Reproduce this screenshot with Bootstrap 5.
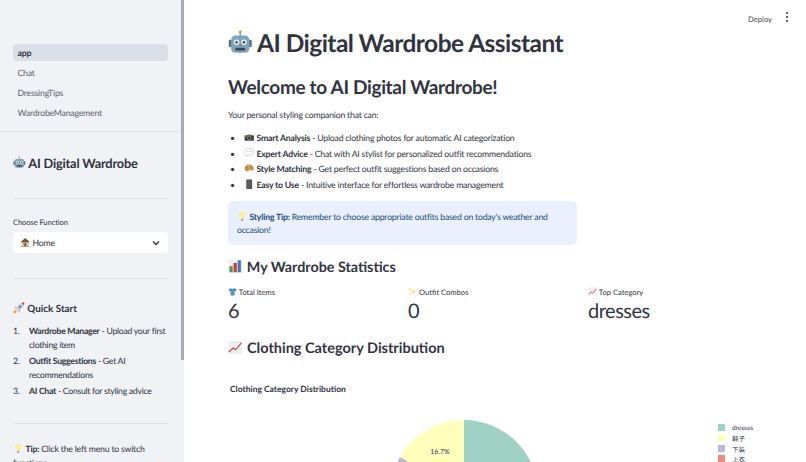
<!DOCTYPE html>
<html lang="en">
<head>
<meta charset="UTF-8">
<meta name="viewport" content="width=device-width, initial-scale=1.0">
<title>AI Digital Wardrobe Assistant</title>
<link href="https://cdn.jsdelivr.net/npm/bootstrap@5.3.0/dist/css/bootstrap.min.css" rel="stylesheet">
<style>
html, body { height: 100%; overflow: hidden; }
body { font-family: "Lato", "Noto Sans CJK SC", sans-serif; color: #31333f; background: #fff; font-size: 8.7px; letter-spacing: -0.2px; text-rendering: geometricPrecision; }
.emo { display: inline-block; vertical-align: 0.26em; width: 1.2em; height: 1.2em; margin: -0.4em 0; }
.side-panel { width: 184px; height: 462px; flex: none; background: #f0f2f6; position: relative; overflow: hidden; }
.side-thumb { position: absolute; top: 0; right: 0; width: 3px; height: 360px; background: #a8abb1; }
.side-nav { padding: 44px 13px 10px; border-bottom: 1px solid #dfe1e6; margin-right: 3px; gap: 3px; }
.side-nav .nav-link { height: 17px; line-height: 17px; padding: 0 4.5px; font-size: 8.7px; color: #5c5f6b; border-radius: 4px; }
.side-nav .nav-link.active { background: #dbdfe8; color: #31333f; font-weight: 700; }
.side-body { padding: 0 13px; width: 181px; }
.side-title { margin: 21px 0 0; font-size: 12.8px; line-height: 20px; font-weight: 700; letter-spacing: -0.2px; }
.side-title .emo { width: 1em; height: 1em; vertical-align: 0.3em; }
.side-rule { margin: 25px 0 0; border: 0; border-top: 1px solid #dfe1e6; opacity: 1; }
.field-label { font-size: 7.6px; line-height: 12px; margin-top: 17px; letter-spacing: -0.1px; }
.fake-select { height: 21px; margin-top: 4px; background: #fff; border-radius: 4px; padding: 0 8px 0 7px; }
.quick-title { margin: 22px 0 0; font-size: 9.9px; line-height: 16px; font-weight: 700; letter-spacing: 0; }
.quick-list { margin: 7px -2px 0 0; padding: 0; list-style: none; counter-reset: qs; line-height: 14.4px; letter-spacing: -0.28px; }
.quick-list li { display: flex; counter-increment: qs; margin-bottom: 1px; }
.quick-list li::before { content: counter(qs) "."; flex: none; width: 16px; }
.side-tip { line-height: 14.4px; margin: 18px 0 0; }
.main-pane { flex: 1; min-width: 0; height: 462px; padding: 0 38px 0 44px; overflow: hidden; }
.top-bar { height: 30px; padding-top: 11px; line-height: 16px; font-size: 7.6px; letter-spacing: 0; margin-right: -20px; color: #444650; }
.dots { width: 2px; margin-left: 14px; gap: 2px; padding-top: 1px; }
.dots i { display: block; width: 2px; height: 2px; border-radius: 50%; background: #31333f; }
.page-title { margin: 0; font-size: 24.5px; line-height: 28px; font-weight: 700; white-space: nowrap; letter-spacing: -0.54px; }
.page-title .emo { width: 1em; height: 1em; vertical-align: 0.3em; }
.page-sub { margin: 16px 0 0; font-size: 19px; line-height: 28px; font-weight: 700; letter-spacing: -0.33px; }
.intro { margin: 5px 0 0; line-height: 16px; }
.feature-list { margin: 7px 0 0; padding: 0; list-style: none; }
.feature-list li { line-height: 15.7px; padding-left: 16px; position: relative; }
.feature-list li::before { content: "•"; position: absolute; left: 2px; }
.tip-box { width: 349px; height: 44px; margin-top: 8px; padding: 9px; background: #e9f0fb; color: #1b4a80; border-radius: 5px; line-height: 13.5px; }
.sec-head { margin: 13px 0 0; font-size: 14.3px; line-height: 20px; font-weight: 700; letter-spacing: 0; }
.sec-head .emo { width: 1em; height: 1em; vertical-align: 0.3em; margin-right: 1px; }
.stat-row { margin-top: 7px; margin-bottom: 15px; }
.stat-row + .sec-head { font-size: 14.5px; margin-top: 0; }
.stat-label { font-size: 7.6px; line-height: 14px; letter-spacing: 0; }
.stat-value { font-size: 20px; line-height: 25px; letter-spacing: -0.5px; }
.chart-area { display: block; margin-top: 11px; }
.chart-area text { fill: #31333f; font-family: "Lato", "Noto Sans CJK SC", sans-serif; letter-spacing: 0; }
</style>
</head>
<body>
<svg width="0" height="0" class="d-block position-absolute">
  <symbol id="i-robot" viewBox="0 0 20 20">
    <circle cx="10" cy="1.6" r="1.3" fill="#e0a23c"/><rect x="9.4" y="2" width="1.2" height="3" fill="#8a97a0"/>
    <rect x="0.6" y="8" width="3" height="6" rx="1.2" fill="#5d7482"/><rect x="16.4" y="8" width="3" height="6" rx="1.2" fill="#5d7482"/>
    <rect x="2.6" y="4.5" width="14.8" height="14" rx="3.5" fill="#7fa6b8"/>
    <circle cx="7" cy="10" r="2.2" fill="#e8eef1"/><circle cx="13" cy="10" r="2.2" fill="#e8eef1"/>
    <circle cx="7" cy="10" r="1" fill="#33424c"/><circle cx="13" cy="10" r="1" fill="#33424c"/>
    <rect x="6" y="14.4" width="8" height="2.3" rx="0.6" fill="#3a4a54"/><path d="M9 11.5h2l-1 2z" fill="#d8574a"/>
  </symbol>
  <symbol id="i-house" viewBox="0 0 20 20">
    <path d="M3.5 9.5h13V18h-13z" fill="#d9b98c"/><path d="M1 10 10 2l9 8z" fill="#7a4a32"/>
    <rect x="8.3" y="12" width="3.4" height="6" fill="#6b4a34"/><rect x="4.6" y="11.5" width="2.6" height="2.6" fill="#7fc0de"/><rect x="12.8" y="11.5" width="2.6" height="2.6" fill="#7fc0de"/>
    <path d="M0 18h20v1.5H0z" fill="#6fa04e"/>
  </symbol>
  <symbol id="i-rocket" viewBox="0 0 20 20">
    <path d="M3 13c-2 1.500-2 4.500-2 6 2 0 4.500-.5 6-2.500z" fill="#f2a02e"/>
    <path d="M6 8.500 3 9.500l2.500 1.500zM11.500 14l-1 3L9 14.500z" fill="#c9382e"/>
    <path d="M5 11.500C7 6 12 1.500 19 1c-.5 7-5 12-10.500 14z" fill="#c3ccd4"/>
    <path d="M14.500 1.600 18.500 5.500C19 4 19 2.500 19 1c-1.500 0-3 .2-4.500.6z" fill="#d6402f"/>
    <circle cx="12" cy="8" r="2" fill="#4a87b8"/>
  </symbol>
  <symbol id="i-bulb" viewBox="0 0 20 20">
    <path d="M10 1a6.300 6.300 0 0 0-3.700 11.400c.8.700 1 1.600 1 2.600h5.400c0-1 .2-1.900 1-2.600A6.300 6.300 0 0 0 10 1z" fill="#fbeea0"/>
    <rect x="7.500" y="15" width="5" height="3" rx="0.800" fill="#a9aeb3"/><rect x="8.500" y="18" width="3" height="1.300" rx="0.600" fill="#7d8287"/>
  </symbol>
  <symbol id="i-camera" viewBox="0 0 20 20">
    <path d="M7 4h6l1 2H6z" fill="#e8a83a"/><rect x="1" y="6" width="18" height="11" rx="1.500" fill="#3f4448"/>
    <circle cx="10" cy="11.500" r="3.800" fill="#8a9097"/><circle cx="10" cy="11.500" r="2.200" fill="#2a2d30"/><rect x="2.500" y="7.200" width="3" height="1.300" fill="#c5c9cc"/>
  </symbol>
  <symbol id="i-bubble" viewBox="0 0 20 20">
    <path d="M10 2.500c-5 0-9 2.900-9 6.700 0 2.300 1.500 4.300 3.800 5.500L4 18l4.200-2.300c.6.100 1.200.1 1.800.1 5 0 9-2.900 9-6.600s-4-6.700-9-6.700z" fill="#fff" stroke="#a9aeb5" stroke-width="0.900"/>
    <circle cx="6.500" cy="9.200" r="0.900" fill="#8f959c"/><circle cx="10" cy="9.200" r="0.900" fill="#8f959c"/><circle cx="13.500" cy="9.200" r="0.900" fill="#8f959c"/>
  </symbol>
  <symbol id="i-palette" viewBox="0 0 20 20">
    <path d="M9.500 3C4.500 3 1 6.500 1 10.500S5 17 8 16c1.500-.5 1-2 2-2.500s3 .8 5.500.8c2.500 0 3.500-1.500 3.500-3C19 6.500 14.500 3 9.500 3z" fill="#c99a5a"/>
    <circle cx="5.500" cy="8" r="1.500" fill="#d9483b"/><circle cx="9.500" cy="6.300" r="1.500" fill="#e9c13a"/><circle cx="13.800" cy="7.800" r="1.500" fill="#5a9e4a"/><circle cx="4.800" cy="12" r="1.500" fill="#3f79b8"/>
  </symbol>
  <symbol id="i-phone" viewBox="0 0 20 20">
    <rect x="4.500" y="0.800" width="11" height="18.400" rx="2" fill="#3d4044"/><rect x="5.700" y="2.500" width="8.600" height="14" fill="#5a5e63"/><rect x="8.500" y="17.300" width="3" height="1" rx="0.500" fill="#8a8e92"/>
  </symbol>
  <symbol id="i-bars" viewBox="0 0 20 20">
    <rect x="0.500" y="0.500" width="19" height="19" fill="#eef1f4"/><rect x="2" y="10" width="4.500" height="8.500" fill="#4a9b4f"/><rect x="7.800" y="5.500" width="4.500" height="13" fill="#cf3b32"/><rect x="13.500" y="2" width="4.500" height="16.500" fill="#3c78c0"/>
  </symbol>
  <symbol id="i-shirt" viewBox="0 0 20 20">
    <path d="M6.500 2 1 5.500l2 4.500 2.500-1V18.500h9V9l2.500 1 2-4.500L13.500 2c-.5 1.500-2 2.200-3.500 2.200S7 3.500 6.500 2z" fill="#4f93c4"/>
    <path d="M7.500 2.200c.6 1.200 1.500 2 2.500 2s1.900-.8 2.500-2z" fill="#cfe3f1"/>
  </symbol>
  <symbol id="i-spark" viewBox="0 0 20 20">
    <path d="M12 2l1.800 5.700L19.500 10l-5.700 2.200L12 18l-1.800-5.800L4.500 10l5.700-2.300z" fill="#fbe58a"/>
    <path d="M4.500 1.500l.9 2.600L8 5l-2.600.9-.9 2.600-.9-2.600L1 5l2.600-.9zM4.500 13l.7 1.800L7 15.500l-1.800.7-.7 1.800-.7-1.800L2 15.500l1.800-.7z" fill="#fbd65a"/>
  </symbol>
  <symbol id="i-trend" viewBox="0 0 20 20">
    <rect x="0.500" y="1" width="19" height="18" fill="#eceef1"/>
    <path d="M1 16.500 7 11l3.500 2.500L18.500 4" fill="none" stroke="#d2473f" stroke-width="1.700"/>
  </symbol>
</svg>

<div class="d-flex">
  <aside class="side-panel">
    <div class="side-thumb"></div>
    <nav class="nav flex-column side-nav">
      <a class="nav-link active" href="#">app</a>
      <a class="nav-link" href="#">Chat</a>
      <a class="nav-link" href="#">DressingTips</a>
      <a class="nav-link" href="#">WardrobeManagement</a>
    </nav>
    <div class="side-body">
      <h2 class="side-title"><svg class="emo"><use href="#i-robot"/></svg> AI Digital Wardrobe</h2>
      <hr class="side-rule">
      <div class="field-label">Choose Function</div>
      <div class="fake-select d-flex align-items-center justify-content-between">
        <span><svg class="emo"><use href="#i-house"/></svg> Home</span>
        <svg width="8" height="6" viewBox="0 0 8 6"><path d="M1 1.500 4 4.500 7 1.500" fill="none" stroke="#31333f" stroke-width="1.300"/></svg>
      </div>
      <hr class="side-rule">
      <h3 class="quick-title"><svg class="emo"><use href="#i-rocket"/></svg> Quick Start</h3>
      <ol class="quick-list">
        <li><span><b>Wardrobe Manager</b> - Upload your first clothing item</span></li>
        <li><span><b>Outfit Suggestions</b> - Get AI recommendations</span></li>
        <li><span><b>AI Chat</b> - Consult for styling advice</span></li>
      </ol>
      <hr class="side-rule">
      <p class="side-tip"><svg class="emo"><use href="#i-bulb"/></svg> <b>Tip:</b> Click the left menu to switch functions</p>
    </div>
  </aside>

  <main class="main-pane">
    <div class="top-bar d-flex justify-content-end align-items-start">
      <span>Deploy</span>
      <span class="dots d-flex flex-column"><i></i><i></i><i></i></span>
    </div>
    <h1 class="page-title"><svg class="emo"><use href="#i-robot"/></svg> AI Digital Wardrobe Assistant</h1>
    <h2 class="page-sub">Welcome to AI Digital Wardrobe!</h2>
    <p class="intro">Your personal styling companion that can:</p>
    <ul class="feature-list mb-0">
      <li><svg class="emo"><use href="#i-camera"/></svg> <b>Smart Analysis</b> - Upload clothing photos for automatic AI categorization</li>
      <li><svg class="emo"><use href="#i-bubble"/></svg> <b>Expert Advice</b> - Chat with AI stylist for personalized outfit recommendations</li>
      <li><svg class="emo"><use href="#i-palette"/></svg> <b>Style Matching</b> - Get perfect outfit suggestions based on occasions</li>
      <li><svg class="emo"><use href="#i-phone"/></svg> <b>Easy to Use</b> - Intuitive interface for effortless wardrobe management</li>
    </ul>
    <div class="tip-box"><svg class="emo"><use href="#i-bulb"/></svg> <b>Styling Tip:</b> Remember to choose appropriate outfits based on today's weather and occasion!</div>
    <h3 class="sec-head"><svg class="emo"><use href="#i-bars"/></svg> My Wardrobe Statistics</h3>
    <div class="row g-0 stat-row">
      <div class="col-4"><div class="stat-label"><svg class="emo"><use href="#i-shirt"/></svg> Total Items</div><div class="stat-value">6</div></div>
      <div class="col-4"><div class="stat-label"><svg class="emo"><use href="#i-spark"/></svg> Outfit Combos</div><div class="stat-value">0</div></div>
      <div class="col-4"><div class="stat-label"><svg class="emo"><use href="#i-trend"/></svg> Top Category</div><div class="stat-value">dresses</div></div>
    </div>
    <h3 class="sec-head"><svg class="emo"><use href="#i-trend"/></svg> Clothing Category Distribution</h3>
    <svg class="chart-area" width="540" height="92" viewBox="228 370 540 92">
      <text x="230" y="392" font-size="8.500" font-weight="700">Clothing Category Distribution</text>
      <path d="M464 494V420A74 74 0 0 1 464 568Z" fill="#a0d1c5"/>
      <path d="M464 494 400 457A74 74 0 0 1 464 420Z" fill="#ffffbb"/>
      <path d="M464 494 400 531A74 74 0 0 1 400 457Z" fill="#bcb8d6"/>
      <text x="440" y="454" font-size="7" text-anchor="middle">16.7%</text>
      <rect x="718" y="424" width="7" height="7" fill="#a0d1c5"/><text x="732" y="430" font-size="6.500">dresses</text>
      <rect x="718" y="434" width="7" height="7" fill="#ffffbb"/><text x="732" y="441" font-size="6.500">鞋子</text>
      <rect x="718" y="445" width="7" height="7" fill="#bcb8d6"/><text x="732" y="452" font-size="6.500">下装</text>
      <rect x="718" y="455" width="7" height="7" fill="#ec8a7c"/><text x="732" y="462" font-size="6.500">上衣</text>
    </svg>
  </main>
</div>
<script src="https://cdn.jsdelivr.net/npm/bootstrap@5.3.0/dist/js/bootstrap.bundle.min.js"></script>
</body>
</html>
